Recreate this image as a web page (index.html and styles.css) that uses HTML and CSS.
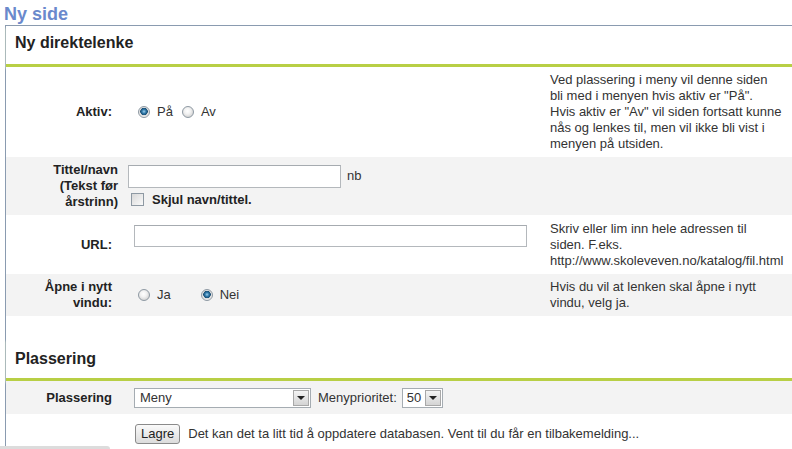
FILE: index.html
```html
<!DOCTYPE html>
<html>
<head>
    <title>Ny side</title>
    <link rel="stylesheet" href="styles.css">
</head>
<body>
    <h1 class="page-title">Ny side</h1>
    <div class="panel">
        <div class="section">
            <h2 class="section-title">Ny direktelenke</h2>
            <div class="field">
                <div class="field-label">Aktiv:</div>
                <div class="field-input radios">
                    <label class="opt"><input type="radio" name="aktiv" checked> På</label>
                    <label class="opt"><input type="radio" name="aktiv"> Av</label>
                </div>
                <div class="field-help">Ved plassering i meny vil denne siden bli med i menyen hvis aktiv er "På".<br>Hvis aktiv er "Av" vil siden fortsatt kunne nås og lenkes til, men vil ikke bli vist i menyen på utsiden.</div>
            </div>
            <div class="field alt">
                <div class="field-label long">Tittel/navn<br>(Tekst før<br>årstrinn)</div>
                <div class="field-input">
                    <div class="title-line">
                        <input type="text" class="text-title">
                        <span class="lang">nb</span>
                    </div>
                    <label class="check"><input type="checkbox"> Skjul navn/tittel.</label>
                </div>
                <div class="field-help"></div>
            </div>
            <div class="field field-url">
                <div class="field-label">URL:</div>
                <div class="field-input top">
                    <input type="text" class="text-url">
                </div>
                <div class="field-help">Skriv eller lim inn hele adressen til siden. F.eks. http://www.skoleveven.no/katalog/fil.html</div>
            </div>
            <div class="field alt">
                <div class="field-label">Åpne i nytt<br>vindu:</div>
                <div class="field-input radios">
                    <label class="opt wide"><input type="radio" name="vindu"> Ja</label>
                    <label class="opt"><input type="radio" name="vindu" checked> Nei</label>
                </div>
                <div class="field-help">Hvis du vil at lenken skal åpne i nytt vindu, velg ja.</div>
            </div>
        </div>

        <div class="section second">
            <h2 class="section-title">Plassering</h2>
            <div class="field alt field-place">
                <div class="field-label">Plassering</div>
                <div class="field-input inline">
                    <span class="dropdown menu-select">
                        <select><option>Meny</option></select>
                        <span class="arrow"></span>
                    </span>
                    <span class="prio-label">Menyprioritet:</span>
                    <span class="dropdown prio-select">
                        <select><option>50</option></select>
                        <span class="arrow"></span>
                    </span>
                </div>
            </div>
            <div class="field field-save">
                <div class="field-label"></div>
                <div class="field-input inline save-line">
                    <button class="btn">Lagre</button>
                    <span class="save-note">Det kan det ta litt tid å oppdatere databasen. Vent til du får en tilbakemelding...</span>
                </div>
            </div>
        </div>
    </div>
    <div class="scroll-stub"></div>
</body>
</html>
```

FILE: styles.css
```css
body {
    margin: 0;
    font-family: "Liberation Sans", Arial, sans-serif;
    font-size: 13px;
    color: #333;
    background: #fff;
    overflow: hidden;
}
.page-title {
    margin: 0;
    padding: 3px 0 0 4px;
    font-size: 18px;
    line-height: 22px;
    color: #6a89cc;
}
.panel {
    margin-left: 5px;
    border-top: 1px solid #8a9bb0;
    border-left: 1px solid #8a9bb0;
}
.section-title {
    margin: 0;
    padding: 7px 9px 11px;
    font-size: 16px;
    line-height: 20px;
    color: #222;
    border-bottom: 3px solid #b8cf45;
    box-shadow: 0 2px 2px #f1f7d2;
}
.second {
    margin-top: 23px;
}
.second .section-title {
    padding-top: 10px;
    padding-bottom: 9px;
}
.field {
    display: grid;
    grid-template-columns: 122px 422px 234px;
    align-items: center;
    background: #fff;
}
.field.alt {
    background: #f3f3f3;
}
.field-label {
    padding: 5px 16px 5px 0;
    text-align: right;
    font-weight: bold;
    line-height: 16px;
    color: #222;
}
.field-label.long {
    padding-right: 10px;
}
.field-help {
    padding: 5px 0 5px;
    line-height: 16px;
    color: #333;
}
.field-input {
    line-height: 16px;
}
.field-input.top {
    align-self: start;
    padding-top: 10px;
}
.field-url {
    min-height: 59px;
}
.radios {
    display: flex;
    align-items: center;
    padding-left: 10px;
}
.opt {
    display: inline-flex;
    align-items: center;
    gap: 7px;
    margin-right: 9px;
}
.opt.wide {
    margin-right: 30px;
}
input[type="radio"] {
    appearance: none;
    -webkit-appearance: none;
    width: 12px;
    height: 12px;
    margin: 0;
    border: 1px solid #8e99a3;
    border-radius: 50%;
    background: radial-gradient(circle at 45% 40%, #fff 0, #f2f2f2 3px, #d6d6d6 6px);
}
input[type="radio"]:checked {
    background: radial-gradient(circle at 50% 45%, #9fd0ee 0, #2f78a8 2px, #1a4e74 3.5px, #dcdcdc 4px, #f6f6f6 6px);
}
.title-line {
    display: flex;
    align-items: center;
}
.text-title,
.text-url {
    box-sizing: border-box;
    margin: 0;
    border: 1px solid #b4b8bc;
    border-top-color: #a6abb0;
    background: #fff;
    font: inherit;
    padding: 0 3px;
}
.text-title {
    width: 213px;
    height: 23px;
}
.text-url {
    width: 393px;
    height: 22px;
    margin-left: 6px;
}
.lang {
    margin-left: 6px;
}
.check {
    display: flex;
    align-items: center;
    gap: 8px;
    margin: 4px 0 0 3px;
    font-weight: bold;
    color: #222;
}
input[type="checkbox"] {
    appearance: none;
    -webkit-appearance: none;
    width: 13px;
    height: 13px;
    margin: 0;
    border: 1px solid #8e99a3;
    background: linear-gradient(135deg, #d8d8d8, #fafafa);
}
.field-place .field-label,
.field-place .field-input {
    padding-top: 7px;
    padding-bottom: 6px;
}
.inline {
    display: flex;
    align-items: center;
    white-space: nowrap;
}
.dropdown {
    display: inline-flex;
    align-items: center;
    box-sizing: border-box;
    height: 20px;
    border: 1px solid #a5acb2;
    background: #fff;
}
.dropdown select {
    appearance: none;
    -webkit-appearance: none;
    flex: 1;
    min-width: 0;
    height: 18px;
    border: none;
    background: transparent;
    font: inherit;
    color: #333;
    padding: 0 0 0 5px;
    outline: none;
}
.arrow {
    position: relative;
    box-sizing: border-box;
    flex: none;
    width: 16px;
    height: 16px;
    margin-right: 1px;
    border: 1px solid #a8a8a8;
    background: linear-gradient(#f4f4f4, #d4d4d4);
}
.arrow::after {
    content: "";
    position: absolute;
    left: 3px;
    top: 5px;
    border-left: 4px solid transparent;
    border-right: 4px solid transparent;
    border-top: 4px solid #222;
}
.menu-select {
    width: 177px;
    margin-left: 6px;
}
.prio-label {
    margin: 0 5px 0 7px;
}
.prio-select {
    width: 41px;
}
.prio-select select {
    padding-left: 4px;
}
.save-line {
    padding: 10px 0 2px;
}
.btn {
    box-sizing: border-box;
    height: 20px;
    margin-left: 7px;
    padding: 0 5px;
    border: 1px solid #8a8a8a;
    border-radius: 3px;
    background: linear-gradient(#fafafa, #dcdcdc);
    font: inherit;
    color: #222;
}
.save-note {
    margin-left: 8px;
}
.scroll-stub {
    width: 110px;
    height: 6px;
    background: #dcdcdc;
    border-radius: 0 3px 0 0;
}
```
